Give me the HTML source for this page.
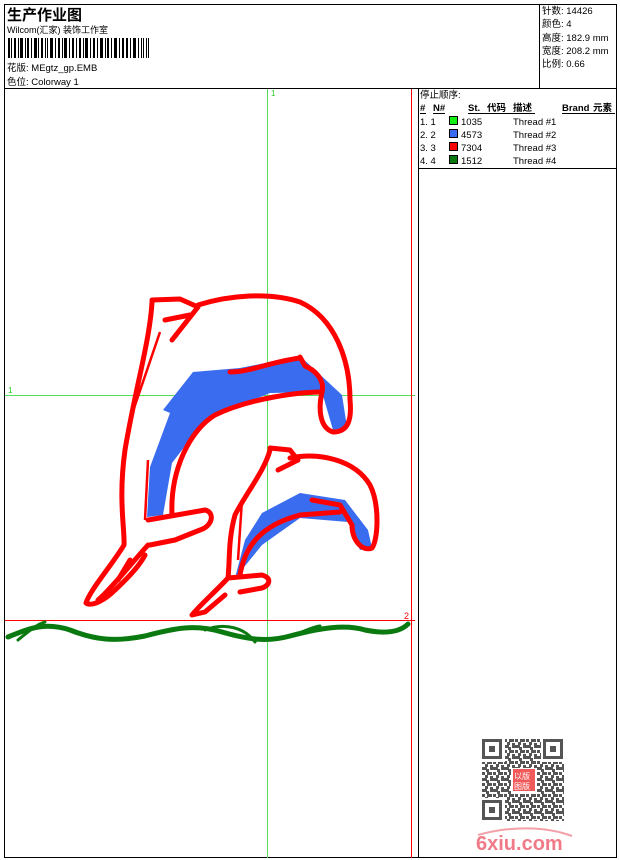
<!DOCTYPE html>
<html><head><meta charset="utf-8"><style>
html,body{margin:0;padding:0;background:#fff;width:620px;height:860px;overflow:hidden}
svg{display:block}
text{font-family:"Liberation Sans","Noto Sans CJK SC",sans-serif;font-size:9.5px;fill:#000}
</style></head><body>
<svg width="620" height="860" viewBox="0 0 620 860" xmlns="http://www.w3.org/2000/svg">
<defs>
<pattern id="qr" width="11" height="11" patternUnits="userSpaceOnUse" x="482" y="739">
<rect x="0" y="0" width="3" height="3" fill="#555"/><rect x="5" y="0" width="5" height="3" fill="#555"/>
<rect x="3" y="3" width="3" height="3" fill="#555"/><rect x="8" y="4" width="3" height="5" fill="#555"/>
<rect x="0" y="6" width="5" height="3" fill="#555"/><rect x="4" y="8" width="3" height="3" fill="#555"/>
</pattern>
</defs>
<!-- frame -->
<rect x="4.5" y="4.5" width="612" height="853" fill="none" stroke="#000"/>
<line x1="4" y1="88.5" x2="617" y2="88.5" stroke="#000"/>
<line x1="539.5" y1="4" x2="539.5" y2="88" stroke="#000"/>
<line x1="418.5" y1="88" x2="418.5" y2="858" stroke="#000"/>
<line x1="418" y1="168.5" x2="617" y2="168.5" stroke="#000"/>
<!-- header -->
<text x="7" y="20" style="font-size:15px;font-weight:bold">生产作业图</text>
<text x="7" y="33" style="font-size:9px">Wilcom(汇家) 装饰工作室</text>
<g fill="#000">
<rect x="8" y="38" width="2" height="20"/><rect x="11" y="38" width="1" height="20"/><rect x="14" y="38" width="2" height="20"/><rect x="18" y="38" width="1" height="20"/><rect x="20" y="38" width="3" height="20"/><rect x="25" y="38" width="1" height="20"/><rect x="27" y="38" width="2" height="20"/><rect x="31" y="38" width="1" height="20"/><rect x="34" y="38" width="3" height="20"/><rect x="38" y="38" width="1" height="20"/><rect x="41" y="38" width="2" height="20"/><rect x="45" y="38" width="1" height="20"/><rect x="47" y="38" width="1" height="20"/><rect x="50" y="38" width="3" height="20"/><rect x="55" y="38" width="1" height="20"/><rect x="58" y="38" width="2" height="20"/><rect x="62" y="38" width="1" height="20"/><rect x="64" y="38" width="3" height="20"/><rect x="69" y="38" width="1" height="20"/><rect x="72" y="38" width="2" height="20"/><rect x="76" y="38" width="1" height="20"/><rect x="79" y="38" width="2" height="20"/><rect x="83" y="38" width="1" height="20"/><rect x="85" y="38" width="3" height="20"/><rect x="90" y="38" width="1" height="20"/><rect x="93" y="38" width="2" height="20"/><rect x="97" y="38" width="1" height="20"/><rect x="100" y="38" width="3" height="20"/><rect x="105" y="38" width="1" height="20"/><rect x="107" y="38" width="2" height="20"/><rect x="111" y="38" width="1" height="20"/><rect x="114" y="38" width="3" height="20"/><rect x="119" y="38" width="1" height="20"/><rect x="122" y="38" width="2" height="20"/><rect x="126" y="38" width="2" height="20"/><rect x="130" y="38" width="1" height="20"/><rect x="133" y="38" width="3" height="20"/><rect x="138" y="38" width="1" height="20"/><rect x="141" y="38" width="1" height="20"/><rect x="143" y="38" width="1" height="20"/><rect x="146" y="38" width="1" height="20"/><rect x="148" y="38" width="1" height="20"/>
</g>
<text x="7" y="71">花版:  MEgtz_gp.EMB</text>
<text x="7" y="85">色位:  Colorway 1</text>
<text x="542" y="14">针数: 14426</text>
<text x="542" y="27">颜色: 4</text>
<text x="542" y="41">高度: 182.9 mm</text>
<text x="542" y="54">宽度: 208.2 mm</text>
<text x="542" y="67">比例: 0.66</text>
<!-- table -->
<text x="420" y="98">停止顺序:</text>
<g style="font-weight:bold">
<text x="420" y="111">#</text><text x="433" y="111">N#</text><text x="468" y="111">St.</text><text x="487" y="111">代码</text><text x="513" y="111">描述</text><text x="562" y="111">Brand</text><text x="593" y="111">元素</text>
</g>
<g stroke="#000" stroke-width="1"><line x1="420" y1="113.5" x2="426" y2="113.5"/><line x1="433" y1="113.5" x2="445" y2="113.5"/><line x1="468" y1="113.5" x2="535" y2="113.5"/><line x1="562" y1="113.5" x2="615" y2="113.5"/></g>
<text x="420" y="125">1.  1</text><rect x="449.5" y="116.5" width="8" height="8" fill="#1e1" stroke="#000"/><text x="461" y="125">1035</text><text x="513" y="125">Thread #1</text>
<text x="420" y="138">2.  2</text><rect x="449.5" y="129.5" width="8" height="8" fill="#3a6cf0" stroke="#000"/><text x="461" y="138">4573</text><text x="513" y="138">Thread #2</text>
<text x="420" y="151">3.  3</text><rect x="449.5" y="142.5" width="8" height="8" fill="#f00" stroke="#000"/><text x="461" y="151">7304</text><text x="513" y="151">Thread #3</text>
<text x="420" y="164">4.  4</text><rect x="449.5" y="155.5" width="8" height="8" fill="#0a7a10" stroke="#000"/><text x="461" y="164">1512</text><text x="513" y="164">Thread #4</text>
<!-- guide lines -->
<line x1="267.5" y1="89" x2="267.5" y2="858" stroke="#5d5" stroke-width="1"/>
<line x1="5" y1="395.5" x2="415" y2="395.5" stroke="#5d5" stroke-width="1"/>
<text x="271" y="96" style="fill:#2c2;font-size:8px">1</text>
<text x="8" y="393" style="fill:#2c2;font-size:8px">1</text>
<line x1="411.5" y1="89" x2="411.5" y2="858" stroke="#f00"/>
<line x1="5" y1="620.5" x2="415" y2="620.5" stroke="#f00"/>
<text x="404" y="619" style="fill:#f00;font-size:9px">2</text>
<!-- blue bodies -->
<path d="M163,410 L193,372 L240,368 L300,356 L342,395 L347,427 L333,430 L322,392 L270,393 L205,420 L172,463 L163,515 L147,517 L150,467 L170,413 Z" fill="#3a6cf0"/>
<path d="M262,513 L300,493 L345,500 L368,530 L372,548 L360,550 L348,522 L300,518 L262,545 L240,572 L235,578 L245,540 Z" fill="#3a6cf0"/>
<!-- red outlines -->
<g fill="none" stroke="#f00" stroke-width="5" stroke-linejoin="round" stroke-linecap="round">
<path d="M152,302 C150,340 135,390 125,450 C118,500 125,530 124,545 C112,565 90,590 86,603 C92,607 105,600 115,590 C128,578 140,565 145,555"/>
<path d="M152,300 L180,299 L198,307 L172,340"/>
<path d="M165,320 L190,315"/>
<path d="M198,305 C230,295 270,292 300,302 C335,318 350,360 350,400 C352,420 348,432 333,432 C320,428 318,410 322,392 C325,380 315,370 305,366 L300,357"/>
<path d="M300,358 C270,362 250,372 230,372"/>
<path d="M172,515 C170,470 190,430 215,415 C250,398 300,392 322,392"/>
<path d="M148,520 L205,510 C215,512 213,526 200,530 L175,540 L150,545"/>
<path d="M148,545 C130,565 110,590 98,600"/>
<path d="M130,560 L118,580"/>
<path d="M270,448 L290,450 L298,460 L278,470"/>
<path d="M290,458 C320,452 355,460 370,485 C380,505 378,540 372,548 C362,552 352,540 352,525 L340,505 L312,500"/>
<path d="M270,450 C265,470 245,495 235,515 C228,540 230,560 228,578 C215,592 200,605 192,615 L205,612 L225,595"/>
<path d="M240,575 C245,545 262,525 300,515 L340,512"/>
<path d="M228,578 L262,575 C272,578 270,585 262,588 L240,592"/>
</g>
<g fill="none" stroke="#f00" stroke-width="2.5"><path d="M160,332 L130,420 M148,460 L145,520 M242,500 L238,560 M105,595 L120,575"/></g>
<!-- waves -->
<g fill="none" stroke="#0a7a10" stroke-width="5" stroke-linecap="round">
<path d="M8,637 C30,628 45,622 70,630 C95,640 115,642 145,636 C175,628 195,624 222,632 C250,640 268,642 290,636 C320,628 345,624 365,630 C385,634 400,632 408,624"/>
<path d="M18,640 C30,630 38,624 45,622" stroke-width="3"/>
<path d="M205,630 C225,622 245,628 255,642" stroke-width="3"/>
<path d="M295,635 C310,628 318,626 320,626" stroke-width="3"/>
</g>
<!-- QR -->
<rect x="482" y="739" width="82" height="82" fill="url(#qr)"/>
<g fill="#fff"><rect x="481" y="738" width="24" height="24"/><rect x="541" y="738" width="24" height="24"/><rect x="481" y="798" width="24" height="24"/><rect x="511" y="768" width="26" height="26"/></g>
<g fill="none" stroke="#555" stroke-width="3"><rect x="483.5" y="740.5" width="17" height="17"/><rect x="544.5" y="740.5" width="17" height="17"/><rect x="483.5" y="801.5" width="17" height="17"/></g>
<g fill="#555"><rect x="489" y="746" width="6" height="6"/><rect x="550" y="746" width="6" height="6"/><rect x="489" y="807" width="6" height="6"/></g>
<rect x="513" y="769" width="22" height="22" fill="#f05a5a"/>
<text x="514" y="779" style="fill:#fff;font-size:8px">以版</text><text x="514" y="789" style="fill:#fff;font-size:8px">图版</text>
<path d="M478,835 C510,826 545,826 572,836" fill="none" stroke="#f3a0a8" stroke-width="2"/>
<text x="476" y="850" style="fill:#f07a88;font-size:20px;font-weight:bold">6xiu.com</text>
</svg>
</body></html>
